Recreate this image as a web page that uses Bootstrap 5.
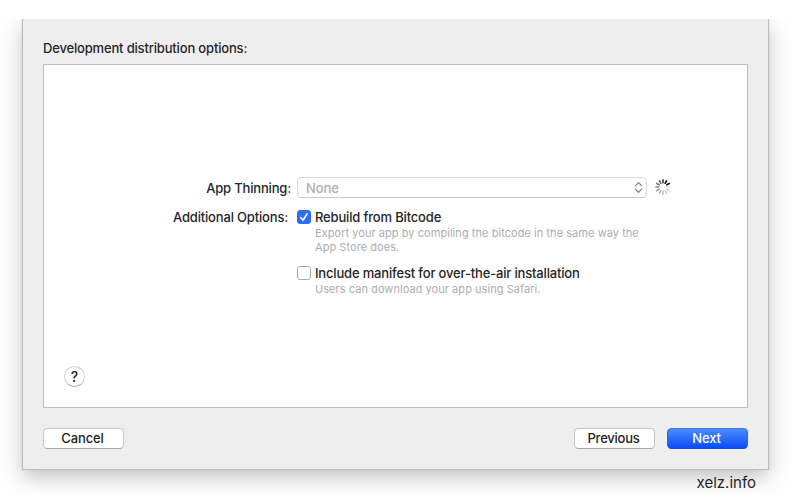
<!DOCTYPE html>
<html lang="en">
<head>
<meta charset="utf-8">
<meta name="viewport" content="width=device-width, initial-scale=1">
<title>Development distribution options</title>
<link href="https://cdn.jsdelivr.net/npm/bootstrap@5.3.0/dist/css/bootstrap.min.css" rel="stylesheet">
<style>
body{font:500 13px/16px Inter,"Liberation Sans",sans-serif;font-weight:450;letter-spacing:-.17px;color:#262626;background:#fff;height:496px;overflow:hidden}
.stage{height:477px;margin-top:19px;padding:0 23px;overflow:hidden}
.sheet{width:745px;height:450px;background:#eee;padding:21px 20px 20px;box-shadow:0 0 1px 1px #bcbcbc,0 8px 20px rgba(0,0,0,.25)}
.heading{font:inherit;height:16px;margin:0 0 8px}
.panel{height:344px;border:1px solid #bdbdbd;background:#fff;padding-top:112px}
.caption{width:253px;padding-right:6px;white-space:nowrap}
.caption.extra{padding-right:9px}
.popup{width:350px;height:21px;border:1px solid #d9d9d9;border-bottom-color:#c8c8c8;border-radius:4.5px;padding:0 3px 0 8px;color:#b0b0b0;background:#fff;font:inherit;letter-spacing:-.1px}
.spinner-mac{margin:-1px 0 1px 8px}
.opts{margin-top:11px}
.note{font-size:11px;line-height:14px;font-weight:400;color:#adadad;letter-spacing:.05px;margin:0 0 0 18px;padding-top:1px;white-space:nowrap}
.form-check.opt{min-height:16px;padding:0;margin:0}
.form-check.second{margin-top:11px}
.opt .form-check-input{float:none;width:14px;height:14px;margin:0 4px 0 0;border:1px solid #adadad;border-radius:3px;box-shadow:none;flex:none}
.opt .form-check-input:checked{background-color:#2d6cf6;border-color:#2d6cf6;background-size:12px;background-image:url("data:image/svg+xml,%3Csvg xmlns='http://www.w3.org/2000/svg' viewBox='0 0 12 12'%3E%3Cpath fill='none' stroke='white' stroke-width='1.6' stroke-linecap='round' stroke-linejoin='round' d='M2.8 6.6 5 9.2 9.2 2.8'/%3E%3C/svg%3E")}
.help{width:21px;height:21px;margin:70px 0 0 20px;border-radius:50%;border:1px solid #cfcfcf;border-bottom-color:#aaa;background:#fff;font:500 14px/19px Inter,sans-serif;color:#222;padding:0;text-align:center}
.form-footer{margin-top:20px}
.push{width:81px;height:21px;border:1px solid #c5c5c5;border-bottom-color:#a8a8a8;border-radius:4.5px;background:#fff;font:inherit;letter-spacing:-.1px;line-height:17px;padding:0 2px 1px 0;color:#222}
.push.prev{margin-right:12px;letter-spacing:-.24px}
.push.primary{border-color:#397df5 #2465f5 #0b4bed;background:linear-gradient(#4b8bf8,#0a4dfb);color:#fff}
.credit{width:733px;padding-top:5px;font:400 15px/18px Inter,sans-serif;letter-spacing:0;text-align:right;position:relative}
</style>
</head>
<body>
<div class="stage">
<main class="sheet">
  <h1 class="heading">Development distribution options:</h1>
  <section class="panel">
    <div class="d-flex align-items-center">
      <label class="caption text-end" for="thin">App Thinning:</label>
      <button id="thin" class="popup d-flex align-items-center justify-content-between" disabled>
        <span>None</span>
        <svg width="9" height="13" viewBox="0 0 9 13" fill="none" stroke="#808080" stroke-width="1.3" stroke-linecap="round" stroke-linejoin="round"><path d="M1.5 4.6 4.5 1.6 7.5 4.6M1.5 8.4 4.5 11.4 7.5 8.4"/></svg>
      </button>
      <svg id="spin" class="spinner-mac" width="16" height="16" viewBox="-8 -8 16 16" stroke-width="1.6" stroke-linecap="round"></svg>
    </div>
    <div class="d-flex opts">
      <div class="caption extra text-end">Additional Options:</div>
      <div>
        <div class="form-check opt d-flex align-items-center"><input class="form-check-input" type="checkbox" id="bit" checked><label for="bit">Rebuild from Bitcode</label></div>
        <p class="note">Export your app by compiling the bitcode in the same way the<br>App Store does.</p>
        <div class="form-check opt second d-flex align-items-center"><input class="form-check-input" type="checkbox" id="ota"><label for="ota">Include manifest for over-the-air installation</label></div>
        <p class="note">Users can download your app using Safari.</p>
      </div>
    </div>
    <button class="help d-block">?</button>
  </section>
  <footer class="form-footer d-flex">
    <button class="push">Cancel</button>
    <button class="push prev ms-auto">Previous</button>
    <button class="push primary">Next</button>
  </footer>
</main>
<div class="credit">xelz.info</div>
</div>
<script>
// Twelve spokes, darkest at the leading edge
const shades=['#333','#000','#000','#ddd','#d4d4d4','#cacaca','#bdbdbd','#b0b0b0','#999','#888','#707070','#555'];
document.getElementById('spin').innerHTML=shades.map((c,i)=>`<path d="M0-4.3V-7.1" stroke="${c}" transform="rotate(${i*30})"/>`).join('');
</script>
<script src="https://cdn.jsdelivr.net/npm/bootstrap@5.3.0/dist/js/bootstrap.bundle.min.js"></script>
</body>
</html>
